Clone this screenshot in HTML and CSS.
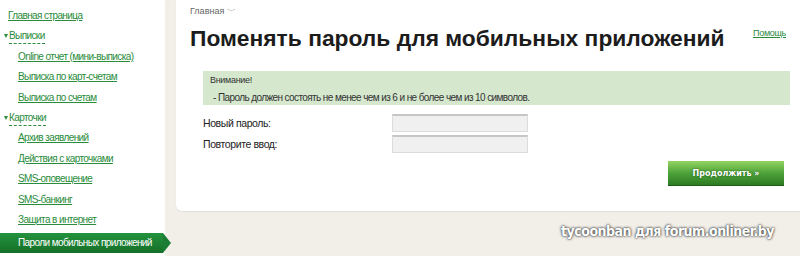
FILE: index.html
```html
<!DOCTYPE html>
<html lang="ru">

<head>
    <meta charset="UTF-8">
    <meta name="viewport" content="width=device-width, initial-scale=1.0">
    <title>Поменять пароль для мобильных приложений</title>
    <link rel="stylesheet" href="styles.css">
</head>

<body>

    <div class="sidebar">
        <ul class="menu">
            <li><a href="#">Главная страница</a></li>
            <li class="group"><span class="tri"></span><a class="toggle" href="#">Выписки</a></li>
            <li class="sub"><a href="#">Online отчет (мини-выписка)</a></li>
            <li class="sub"><a href="#">Выписка по карт-счетам</a></li>
            <li class="sub"><a href="#">Выписка по счетам</a></li>
            <li class="group"><span class="tri"></span><a class="toggle" href="#">Карточки</a></li>
            <li class="sub"><a href="#">Архив заявлений</a></li>
            <li class="sub"><a href="#">Действия с карточками</a></li>
            <li class="sub"><a href="#">SMS-оповещение</a></li>
            <li class="sub"><a href="#">SMS-банкинг</a></li>
            <li class="sub"><a href="#">Защита в интернет</a></li>
            <li class="sub active"><span>Пароли мобильных приложений</span></li>
        </ul>
    </div>

    <div class="content">
        <div class="panel">
            <div class="crumbs">Главная <span class="caret">&#65088;</span></div>
            <div class="head">
                <h1>Поменять пароль для мобильных приложений</h1>
                <a class="help" href="#">Помощь</a>
            </div>

            <div class="notice">
                <div class="notice-title">Внимание!</div>
                <div class="notice-text">- Пароль должен состоять не менее чем из 6 и не более чем из 10 символов.</div>
            </div>

            <form class="form" onsubmit="return false">
                <div class="row">
                    <label for="pass">Новый пароль:</label>
                    <input type="password" id="pass">
                </div>
                <div class="row">
                    <label for="pass2">Повторите ввод:</label>
                    <input type="password" id="pass2">
                </div>
                <div class="actions">
                    <button type="submit">Продолжить »</button>
                </div>
            </form>
        </div>

        <div class="mark">tycoonban для forum.onliner.by</div>
    </div>

</body>

</html>
```

FILE: styles.css
```css
body {
    font-family: "Liberation Sans", Arial, sans-serif;
    background-color: #f2efe9;
    margin: 0;
    padding: 0;
    display: flex;
    height: 256px;
    overflow: hidden;
}

a {
    color: #2a8c3c;
}

.sidebar {
    width: 165px;
    flex-shrink: 0;
    background-color: #fff;
}

.menu {
    list-style: none;
    margin: 0;
    padding: 8px 0 0 0;
}

.menu li {
    height: 20.4px;
    font-size: 10px;
    letter-spacing: -0.6px;
    line-height: 16px;
    padding-left: 8px;
    display: flex;
    align-items: flex-start;
    white-space: nowrap;
}

.menu li.group {
    padding-left: 4px;
}

.menu .tri {
    width: 0;
    height: 0;
    border-left: 2.5px solid transparent;
    border-right: 2.5px solid transparent;
    border-top: 4px solid #2a8c3c;
    margin: 6px 1px 0 0;
}

.menu a.toggle {
    text-decoration: none;
    border-bottom: 1px dashed #2a8c3c;
    line-height: 13px;
    height: 14px;
    margin-top: 1px;
}

.menu li.sub {
    padding-left: 18px;
}

.menu li.active {
    position: relative;
    margin-top: 1px;
    height: 20px;
    width: 163px;
    box-sizing: border-box;
    align-items: center;
    color: #fff;
    background: linear-gradient(#24923e, #157029);
}

.menu li.active::after {
    content: "";
    position: absolute;
    right: -8px;
    top: 0;
    border-top: 10px solid transparent;
    border-bottom: 10px solid transparent;
    border-left: 8px solid #1a7d33;
}

.content {
    flex: 1;
    margin-left: 11px;
    display: flex;
    flex-direction: column;
}

.panel {
    background-color: #fff;
    height: 211px;
    box-sizing: border-box;
    border-bottom-left-radius: 6px;
    box-shadow: 0 1px 1px #e2dfd8;
    padding: 5px 14px 0 14px;
}

.crumbs {
    font-size: 9px;
    color: #666;
    height: 14px;
}

.caret {
    font-size: 9px;
}

.head {
    display: flex;
    justify-content: space-between;
    align-items: flex-start;
    height: 52px;
}

h1 {
    margin: 5px 0 0 0;
    font-size: 22.8px;
    line-height: 28px;
    white-space: nowrap;
    color: #1c1c1c;
}

.help {
    font-size: 9px;
    letter-spacing: -0.3px;
    margin-top: 9px;
}

.notice {
    margin-left: 13px;
    margin-right: -4px;
    background-color: #d5e8ce;
    padding: 4px 7px 3px 7px;
    height: 34px;
    box-sizing: border-box;
    color: #333;
}

.notice-title {
    font-size: 9px;
    letter-spacing: -0.3px;
    height: 12px;
}

.notice-text {
    margin-top: 5px;
    padding-left: 3px;
    font-size: 10px;
    letter-spacing: -0.6px;
}

.form {
    margin: 7px 0 0 13px;
}

.row {
    display: flex;
    align-items: center;
    height: 21px;
    font-size: 10.5px;
    letter-spacing: -0.4px;
    color: #222;
}

.row label {
    width: 189px;
}

.row input {
    width: 136px;
    height: 18px;
    box-sizing: border-box;
    border: 1px solid #dcdcdc;
    border-top: 2px solid #c6c6c6;
    background-color: #f0f0f0;
    padding: 0 3px;
}

.actions {
    display: flex;
    justify-content: flex-end;
    margin-top: 7px;
}

button {
    width: 116px;
    height: 25px;
    margin-right: 2px;
    border: none;
    border-bottom: 1px solid #1d5c19;
    background: linear-gradient(#93d462, #4ea33a 50%, #2c7a22);
    color: #fff;
    font-family: "DejaVu Sans", Verdana, sans-serif;
    font-size: 8px;
    font-weight: bold;
    text-shadow: 0 0 2px #1b4d15;
    cursor: pointer;
}

.mark {
    align-self: flex-end;
    margin: 12px 26px 0 0;
    font-family: "DejaVu Sans", sans-serif;
    font-stretch: condensed;
    font-weight: bold;
    font-size: 14px;
    letter-spacing: -0.5px;
    color: #fff;
    text-shadow: 0 0 2px #333, 0 0 3px #555;
}
```
